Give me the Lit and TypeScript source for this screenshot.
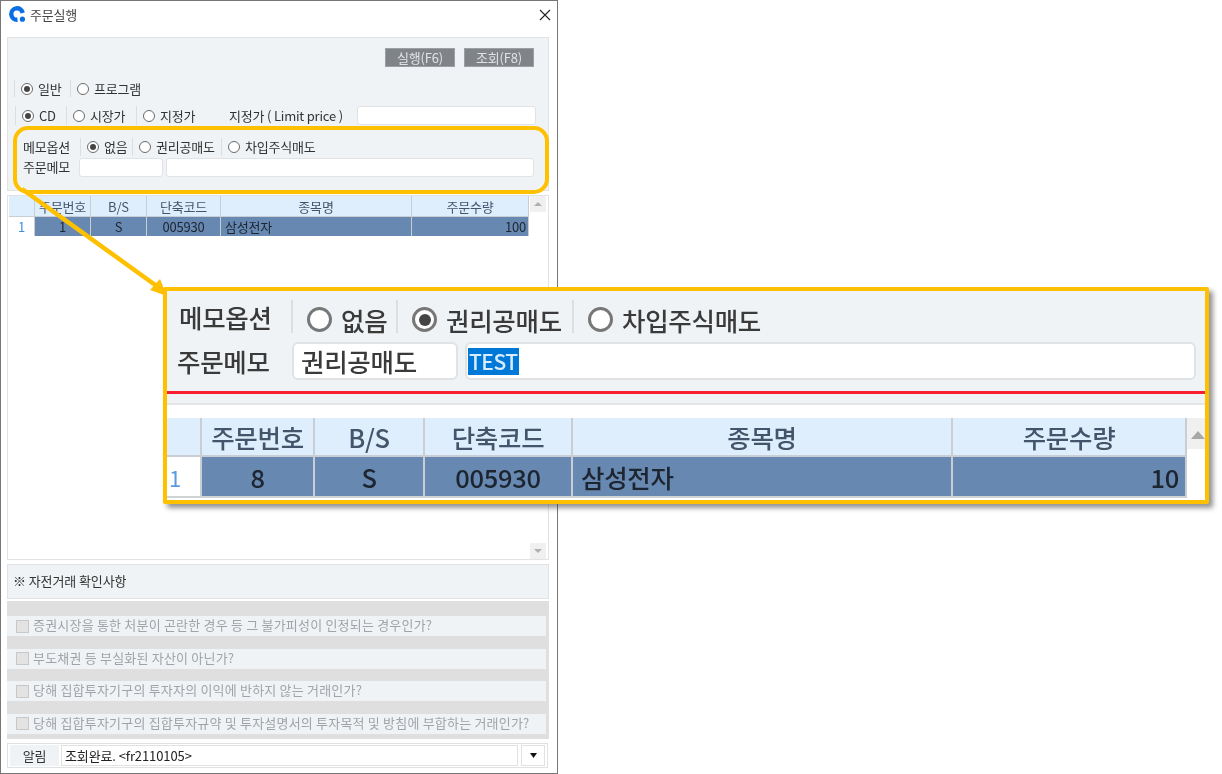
import { LitElement, html, css } from "lit";
import { customElement } from "lit/decorators.js";

const checks = [
  "증권시장을 통한 처분이 곤란한 경우 등 그 불가피성이 인정되는 경우인가?",
  "부도채권 등 부실화된 자산이 아닌가?",
  "당해 집합투자기구의 투자자의 이익에 반하지 않는 거래인가?",
  "당해 집합투자기구의 집합투자규약 및 투자설명서의 투자목적 및 방침에 부합하는 거래인가?",
];
const heads = ["", "주문번호", "B/S", "단축코드", "종목명", "주문수량"];

const radio = (label: string, on = false) => html`
  <label class="opt"><span class="radio ${on ? "on" : ""}"></span><span>${label}</span></label>`;

const table = (no: string, qty: string) => html`
  <div class="tbl">
    ${heads.map((h) => html`<div class="th">${h}</div>`)}
    <div class="td idx">1</div>
    <div class="td sel">${no}</div>
    <div class="td sel">S</div>
    <div class="td sel">005930</div>
    <div class="td sel left">삼성전자</div>
    <div class="td sel right">${qty}</div>
  </div>`;

@customElement("app-root")
export class AppRoot extends LitElement {
  static styles = css`
    :host {
      display: block;
      position: relative;
      width: 1222px;
      height: 774px;
      overflow: hidden;
      background: #fff;
      font-family: "Noto Sans CJK KR", "Noto Sans", sans-serif;
      font-size: 13px;
      letter-spacing: -0.2px;
      color: #333;
    }
    * { box-sizing: border-box; }
    .window {
      width: 558px;
      height: 774px;
      border: 1px solid #777;
      display: flex;
      flex-direction: column;
      padding: 0 8px 0 6px;
      background: #fff;
    }
    .title {
      height: 36px;
      flex: none;
      display: flex;
      align-items: center;
      gap: 4px;
      padding: 0 0 9px 2px;
      color: #444;
      filter: blur(0.3px);
    }
    .title .close { margin-left: auto; margin-right: -2px; display: block; }
    .panel {
      background: #eff3f5;
      border: 1px solid #e0e2e3;
      flex: none;
    }
    .top {
      height: 154px;
      padding: 10px 14px 0 0;
    }
    .soft { filter: blur(0.3px); }
    .btns {
      display: flex;
      justify-content: flex-end;
      gap: 9px;
      height: 19px;
    }
    .btn {
      width: 70px;
      height: 19px;
      background: #808488;
      color: #dfe3e6;
      display: flex;
      align-items: center;
      justify-content: center;
      border: 1px solid #9aa0a4;
      line-height: 1;
    }
    .row {
      display: grid;
      align-items: center;
      line-height: 1;
    }
    .r1 { margin-top: 13px; height: 17px; margin-left: 6px; grid-template-columns: 56px auto; justify-content: start; }
    .r2 { margin-top: 9px; height: 19px; margin-left: 7px; grid-template-columns: 51px 70px 93px 128px 179px; justify-content: start; }
    .r3 { margin-top: 13px; height: 18px; margin-left: 15px; grid-template-columns: 57px 52px 89px auto; justify-content: start; }
    .r3 span:last-child, .r3 > .lbl { padding-bottom: 2px; }
    .r4 { margin-top: 2px; height: 19px; margin-left: 15px; display: flex; gap: 3px; }
    .seg { height: 100%; display: flex; align-items: center; border-left: 1px solid #dcdfe1; padding-left: 6px; }
    .r3 > .lbl { height: 100%; display: flex; align-items: center; }
    .r4 .lbl { width: 53px; display: flex; align-items: center; padding-bottom: 2px; }
    .opt { display: flex; align-items: center; gap: 5px; }
    .radio {
      width: 12px;
      height: 12px;
      border-radius: 50%;
      background: #fff;
      border: 1px solid #6a6a6a;
      display: flex;
      align-items: center;
      justify-content: center;
      flex: none;
    }
    .radio.on::after { content: ""; width: 6px; height: 6px; border-radius: 50%; background: #444; }
    .input {
      height: 19px;
      background: #fff;
      border: 1px solid #e0e2e3;
      border-radius: 3px;
    }
    .i1 { width: 84px; }
    .i2 { width: 368px; }
    .limit { height: 19px; margin-top: -1px; }
    .grid {
      margin-top: 4px;
      height: 365px;
      flex: none;
      border: 1px solid #e0e2e3;
      background: #fff;
      padding: 0 1px;
      display: flex;
    }
    .tbl {
      display: grid;
      grid-template-columns: 26px 56px 56px 74px 191px 117px;
      grid-template-rows: 21px 19px;
      align-content: start;
      flex: none;
      height: 40px;
      border-bottom: 1px solid #cfd3d6;
    }
    .th, .td {
      display: flex;
      align-items: center;
      justify-content: center;
      line-height: 1;
      white-space: nowrap;
    }
    .th {
      background: #dfeefd;
      border-right: 1px solid #c8ced4;
      border-bottom: 1px solid #c8ced4;
      color: #44546a;
    }
    .td.idx { background: #fff; color: #3d8fe0; border-right: 1px solid #c8ced4; }
    .td.sel { background: #6788b1; border-right: 1px solid #c8ced4; color: #1d2530; }
    .td.left { justify-content: flex-start; padding-left: 4px; }
    .td.right { justify-content: flex-end; padding-right: 2px; }
    .scroll {
      margin-left: 1px;
      width: 16px;
      display: flex;
      flex-direction: column;
      justify-content: space-between;
    }
    .scroll i {
      height: 16px;
      background: #f0f0f0;
      display: flex;
      align-items: center;
      justify-content: center;
    }
    .note {
      margin-top: 4px;
      height: 35px;
      display: flex;
      align-items: center;
      padding-left: 5px;
      padding-bottom: 2px;
      color: #333;
      letter-spacing: -0.1px;
    }
    .checks {
      margin-top: 2px;
      height: 138px;
      flex: none;
      background: #dfdfdf;
      padding: 15px 3px 5px 0;
      display: flex;
      flex-direction: column;
      gap: 12.67px;
    }
    .chk {
      height: 20px;
      flex: none;
      background: #eff3f5;
      display: flex;
      align-items: center;
      gap: 4px;
      padding-left: 9px;
      color: #a0a4a8;
      letter-spacing: 0.2px;
      white-space: nowrap;
    }
    .chk span:last-child { margin-top: -3px; }
    .box { width: 13px; height: 13px; background: #e3e3e3; border: 1px solid #c8c8c8; flex: none; }
    .status {
      margin-top: 4px;
      height: 25px;
      flex: none;
      width: 541px;
      border: 1px solid #dfe1e2;
      display: flex;
      padding: 1px 2px;
      gap: 2px;
    }
    .alarm { width: 49px; background: #eff3f5; display: flex; align-items: center; justify-content: center; }
    .msg { width: 458px; border: 1px solid #dfe1e2; display: flex; align-items: center; padding-left: 3px; color: #222; letter-spacing: -0.1px; }
    .drop { width: 24px; margin-left: 1px; border: 1px solid #dfe1e2; display: flex; align-items: center; justify-content: center; }

    .highlight {
      position: absolute;
      left: 13px;
      top: 126px;
      width: 536px;
      height: 68px;
      border: 4px solid #ffc000;
      border-radius: 15px;
    }
    .arrow { position: absolute; left: 0; top: 0; pointer-events: none; }

    .callout {
      position: absolute;
      left: 163px;
      top: 287px;
      width: 1046px;
      height: 217px;
      border: 4.5px solid #ffc000;
      border-radius: 2px;
      background: #eff3f5;
      box-shadow: 4px 4px 5px rgba(60, 60, 60, 0.55);
      font-size: 25.5px;
      font-weight: 500;
      letter-spacing: -0.3px;
      color: #3a3a3a;
      overflow: hidden;
      display: flex;
      flex-direction: column;
    }
    .c-inner { filter: blur(0.5px); display: flex; flex-direction: column; flex: 1; }
    .c-r1 { height: 42px; padding: 9px 0 0 12px; display: grid; grid-template-columns: 112px 105px 176px auto; justify-content: start; flex: none; }
    .c-r1 > * { height: 33px; display: flex; align-items: center; }
    .c-r1 .seg { border-left: 2px solid #dcdfe1; padding-left: 14px; }
    .c-r1 .opt { gap: 9px; margin-top: 6px; }
    .c-r1 .radio { width: 25px; height: 25px; border: 3px solid #777; }
    .c-r1 .radio.on::after { width: 12px; height: 12px; }
    .c-r2 { height: 58px; padding: 9px 0 0 10px; display: flex; flex: none; align-items: flex-start; line-height: 1; }
    .c-r2 .lbl { width: 115px; height: 37px; display: flex; align-items: center; }
    .c-r2 .input { height: 38px; border-width: 2px; border-radius: 6px; display: flex; align-items: center; }
    .c-i1 { width: 166px; padding-left: 7px; }
    .c-i2 { width: 731px; margin-left: 7px; padding-left: 1px; }
    .sel-text { background: #0078d7; color: #d8ecff; font-size: 21px; letter-spacing: -0.5px; height: 27px; display: flex; align-items: center; padding: 0 1px; }
    .c-red { height: 2.5px; background: #f82030; flex: none; }
    .c-gap { height: 11.5px; flex: none; border-bottom: 2px solid #e4e6e7; }
    .c-white { height: 13px; background: #fff; flex: none; }
    .c-tbl { display: flex; flex: 1; background: #fff; }
    .c-tbl .tbl {
      grid-template-columns: 35px 113px 110px 148px 380px 234px;
      grid-template-rows: 39px 39px;
      height: 80px;
      border-bottom: 2px solid #cfd3d6;
    }
    .c-tbl .th { border-right-width: 2px; border-bottom-width: 2px; color: #44546a; }
    .c-tbl .td { border-right-width: 2px; }
    .c-tbl .td.idx { justify-content: flex-start; padding-left: 2px; font-size: 22px; font-weight: 400; color: #5a9be0; }
    .c-tbl .td.left { padding-left: 8px; }
    .c-tbl .td.right { padding-right: 6px; }
    .c-scroll { width: 18px; height: 31px; background: #f0f0f0; display: flex; justify-content: flex-end; padding: 13px 0 0; flex: none; margin-right: -5px; }
  `;

  render() {
    return html`
      <div class="window">
        <div class="title">
          <svg width="17" height="17" viewBox="0 0 17 17">
            <path d="M13.6 7A5.7 5.7 0 1 0 8.5 13.7" fill="none" stroke="#0b6fe3" stroke-width="4.4"/>
            <circle cx="13.4" cy="13.2" r="2.6" fill="#0b6fe3"/>
          </svg>
          <span>주문실행</span>
          <svg class="close" width="12" height="12" viewBox="0 0 12 12">
            <path d="M1 1L11 11M11 1L1 11" stroke="#222" stroke-width="1.1" fill="none"/>
          </svg>
        </div>

        <div class="panel top soft">
          <div class="btns">
            <div class="btn">실행(F6)</div>
            <div class="btn">조회(F8)</div>
          </div>
          <div class="row r1">
            <div class="seg">${radio("일반", true)}</div>
            <div class="seg">${radio("프로그램")}</div>
          </div>
          <div class="row r2">
            <div class="seg">${radio("CD", true)}</div>
            <div class="seg">${radio("시장가")}</div>
            <div class="seg">${radio("지정가")}</div>
            <div class="limit-l">지정가 ( Limit price )</div>
            <div class="input limit"></div>
          </div>
          <div class="row r3">
            <div class="lbl">메모옵션</div>
            <div class="seg">${radio("없음", true)}</div>
            <div class="seg">${radio("권리공매도")}</div>
            <div class="seg">${radio("차입주식매도")}</div>
          </div>
          <div class="row r4">
            <div class="lbl">주문메모</div>
            <div class="input i1"></div>
            <div class="input i2"></div>
          </div>
        </div>

        <div class="grid soft">
          ${table("1", "100")}
          <div class="scroll">
            <i><svg width="8" height="4" viewBox="0 0 8 4"><path d="M4 0L8 4H0Z" fill="#b0b0b0"/></svg></i>
            <i><svg width="8" height="4" viewBox="0 0 8 4"><path d="M0 0H8L4 4Z" fill="#b0b0b0"/></svg></i>
          </div>
        </div>

        <div class="panel note soft">※ 자전거래 확인사항</div>

        <div class="checks soft">
          ${checks.map((c) => html`<div class="chk"><span class="box"></span><span>${c}</span></div>`)}
        </div>

        <div class="status soft">
          <div class="alarm">알림</div>
          <div class="msg">조회완료. &lt;fr2110105&gt;</div>
          <div class="drop">
            <svg width="7" height="5" viewBox="0 0 7 5"><path d="M0 0H7L3.5 5Z" fill="#111"/></svg>
          </div>
        </div>
      </div>

      <div class="highlight"></div>
      <svg class="arrow" width="180" height="300" viewBox="0 0 180 300">
        <path d="M22 189L158 287" stroke="#ffc000" stroke-width="4.5" fill="none"/>
        <path d="M167 296L150 290L160 279Z" fill="#ffc000"/>
      </svg>

      <div class="callout">
        <div class="c-inner">
          <div class="c-r1">
            <div class="lbl">메모옵션</div>
            <div class="seg">${radio("없음")}</div>
            <div class="seg">${radio("권리공매도", true)}</div>
            <div class="seg">${radio("차입주식매도")}</div>
          </div>
          <div class="c-r2">
            <div class="lbl">주문메모</div>
            <div class="input c-i1">권리공매도</div>
            <div class="input c-i2"><span class="sel-text">TEST</span></div>
          </div>
          <div class="c-red"></div>
          <div class="c-gap"></div>
          <div class="c-white"></div>
          <div class="c-tbl">
            ${table("8", "10")}
            <div class="c-scroll">
              <svg width="14" height="8" viewBox="0 0 14 8"><path d="M7 0L14 8H0Z" fill="#a8a8a8"/></svg>
            </div>
          </div>
        </div>
      </div>
    `;
  }
}
